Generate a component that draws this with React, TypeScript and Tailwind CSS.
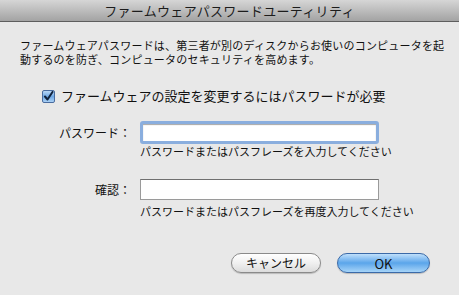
const jp = { fontFamily: '"Noto Sans CJK JP", "Liberation Sans", sans-serif' };

const App = () => {
  return (
    <div
      className="w-[459px] h-[295px] bg-[#e8e8e8] flex flex-col overflow-hidden text-[#111]"
      style={jp}
    >
      {/* title bar */}
      <div className="h-[22px] shrink-0 flex items-center justify-center bg-gradient-to-b from-[#d6d6d6] to-[#a3a3a3] border-b border-[#5e5e5e]">
        <span className="text-[13px] leading-none text-[#1c1c1c] tracking-[0.3px]">ファームウェアパスワードユーティリティ</span>
      </div>

      {/* description */}
      <p className="mt-[16px] pl-[20px] text-[11px] leading-[14px] tracking-[0.2px]">
        ファームウェアパスワードは、第三者が別のディスクからお使いのコンピュータを起
        <br />
        動するのを防ぎ、コンピュータのセキュリティを高めます。
      </p>

      {/* checkbox */}
      <label className="mt-[22px] pl-[42px] flex items-center gap-[6px]">
        <span className="w-[13px] h-[13px] rounded-[2px] border border-[#4a6c9e] bg-gradient-to-b from-[#b9d7f5] via-[#6fa8e4] to-[#a9d0f5] flex items-center justify-center">
          <svg width="11" height="11" viewBox="0 0 11 11">
            <path d="M2 5.5 L4.5 8.5 L9.5 1" fill="none" stroke="#10223c" strokeWidth="2" strokeLinecap="round" strokeLinejoin="round" />
          </svg>
        </span>
        <span className="text-[13px] leading-[16px]">ファームウェアの設定を変更するにはパスワードが必要</span>
      </label>

      {/* password */}
      <div className="mt-[17px] flex items-center">
        <div className="w-[131px] text-right text-[12px] leading-none">パスワード：</div>
        <div className="ml-[9px] w-[239px] h-[23px] rounded-[3px] border-[3px] border-[#8aaede] bg-white shadow-[inset_0_1px_1px_rgba(0,0,0,0.35)]" />
      </div>
      <div className="pl-[140px] text-[11px] leading-[14px]">パスワードまたはパスフレーズを入力してください</div>

      {/* confirm */}
      <div className="mt-[21px] flex items-center">
        <div className="w-[131px] text-right text-[12px] leading-none">確認：</div>
        <div className="ml-[9px] w-[239px] h-[21px] border border-[#9a9a9a] border-t-[#6f6f6f] bg-white" />
      </div>
      <div className="mt-[4px] pl-[140px] text-[11px] leading-[14px]">パスワードまたはパスフレーズを再度入力してください</div>

      {/* buttons */}
      <div className="mt-[35px] pr-[29px] flex justify-end gap-[16px]">
        <button className="w-[90px] h-[20px] rounded-full border border-[#8a8a8a] bg-gradient-to-b from-[#ffffff] via-[#f0f0f0] to-[#dcdcdc] shadow-[0_1px_1px_rgba(0,0,0,0.2)] text-[12px] leading-none">
          キャンセル
        </button>
        <button className="w-[93px] h-[20px] rounded-full border border-[#3b6aa8] bg-gradient-to-b from-[#bfe0fb] via-[#5aa5ea] to-[#a6d4f8] shadow-[0_1px_1px_rgba(0,0,0,0.2)] text-[13px] leading-none">
          OK
        </button>
      </div>
    </div>
  );
};

export default App;
